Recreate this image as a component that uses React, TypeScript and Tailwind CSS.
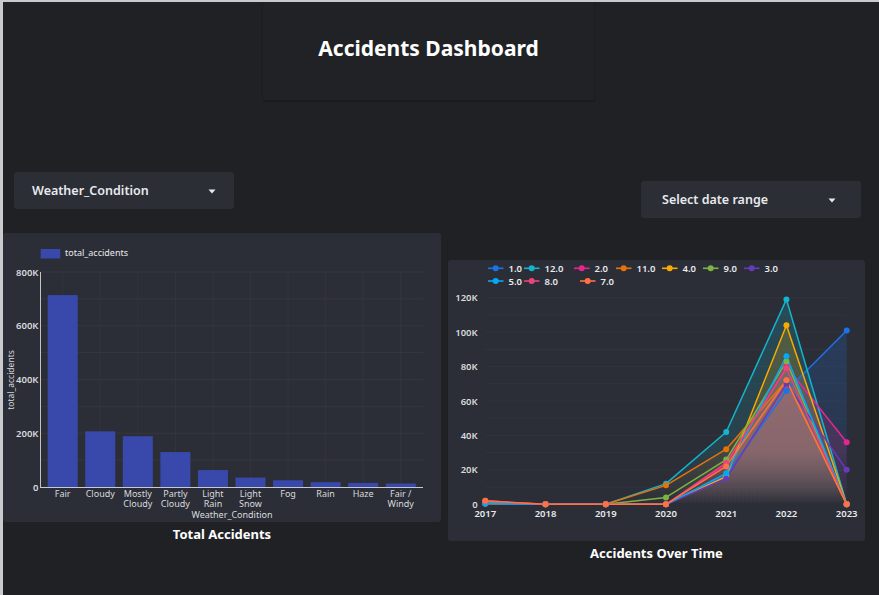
import React from "react";

const bars = [
  { label: ["Fair"], v: 714 },
  { label: ["Cloudy"], v: 207 },
  { label: ["Mostly", "Cloudy"], v: 189 },
  { label: ["Partly", "Cloudy"], v: 130 },
  { label: ["Light", "Rain"], v: 63 },
  { label: ["Light", "Snow"], v: 35 },
  { label: ["Fog"], v: 25 },
  { label: ["Rain"], v: 18 },
  { label: ["Haze"], v: 15 },
  { label: ["Fair /", "Windy"], v: 13 },
];

const series = [
  { name: "1.0", color: "#1a73e8", vals: [0.5, 0, 0, 0, 17, 66, 101], lx: 40, row: 0 },
  { name: "12.0", color: "#12b5cb", vals: [1, 0, 0, 12, 42, 119, 0], lx: 76, row: 0 },
  { name: "2.0", color: "#e52592", vals: [0.5, 0, 0, 0, 23, 80, 36], lx: 126, row: 0 },
  { name: "11.0", color: "#e8710a", vals: [1.5, 0, 0, 11, 32, 72, 0], lx: 168, row: 0 },
  { name: "4.0", color: "#f9ab00", vals: [0.5, 0, 0, 0, 16, 104, 0], lx: 214, row: 0 },
  { name: "9.0", color: "#7cb342", vals: [0.5, 0, 0, 4, 26, 83, 0], lx: 255, row: 0 },
  { name: "3.0", color: "#673ab7", vals: [0.5, 0, 0, 0, 15, 70, 20], lx: 296, row: 0 },
  { name: "5.0", color: "#03a9f4", vals: [0.5, 0, 0, 0, 18, 86, 0], lx: 40, row: 1 },
  { name: "8.0", color: "#e8457a", vals: [2, 0, 0, 0, 24, 79, 0], lx: 76, row: 1 },
  { name: "7.0", color: "#ff7043", vals: [2, 0, 0, 0, 22, 72, 0], lx: 132, row: 1 },
];

const years = ["2017", "2018", "2019", "2020", "2021", "2022", "2023"];

function Caret() {
  return (
    <svg width="8" height="5" viewBox="0 0 8 5">
      <path d="M0.5 0.5 L7.5 0.5 L4 4.5 Z" fill="#e8eaed" />
    </svg>
  );
}

function BarChart() {
  const T = 39;
  const B = 254;
  const L = 37;
  const R = 420;
  const y = (v: number) => B - (v / 800) * (B - T);
  const cx = (i: number) => 59.7 + i * 37.56;
  return (
    <svg width="438" height="289" viewBox="0 0 438 289">
      <rect x="37.7" y="16" width="19.5" height="9.5" fill="#3949ab" />
      <text x="62" y="23.3" fontSize="9" fill="#e8eaed">total_accidents</text>
      {[0, 1, 2, 3, 4, 5, 6, 7].map((k) => (
        <line key={k} x1={L} x2={R} y1={y(k * 100 + 100)} y2={y(k * 100 + 100)} stroke="#3a3d46" strokeWidth="0.6" />
      ))}
      {bars.map((b, i) => (
        <line key={i} x1={cx(i)} x2={cx(i)} y1={T} y2={B} stroke="#363941" strokeWidth="0.6" />
      ))}
      {[0, 200, 400, 600, 800].map((v) => (
        <text key={v} x="35.5" y={y(v) + 3.5} fontSize="9.5" fontWeight="600" fill="#d8dadd" textAnchor="end">
          {v === 0 ? "0" : `${v}K`}
        </text>
      ))}
      {bars.map((b, i) => (
        <rect key={i} x={cx(i) - 15} y={y(b.v)} width="30" height={B - y(b.v)} fill="#3949ab" />
      ))}
      <line x1={L + 0.5} x2={L + 0.5} y1={T} y2={B} stroke="#e8eaed" strokeWidth="0.8" />
      <line x1={L} x2={R} y1={B + 0.5} y2={B + 0.5} stroke="#c8cacd" strokeWidth="1" />
      {bars.map((b, i) => (
        <text key={i} x={cx(i)} y="263.5" fontSize="9" fill="#d8dadd" textAnchor="middle">
          {b.label.map((l, j) => (
            <tspan key={j} x={cx(i)} dy={j ? 10 : 0}>
              {l}
            </tspan>
          ))}
        </text>
      ))}
      <text x="229" y="284.5" fontSize="9" fill="#d8dadd" textAnchor="middle">Weather_Condition</text>
      <text x="0" y="0" fontSize="8.5" fill="#d8dadd" textAnchor="middle" transform="translate(10.5 147) rotate(-90)">
        total_accidents
      </text>
    </svg>
  );
}

function LineChart() {
  const x = (i: number) => 37.3 + i * 60.23;
  const B = 244.3;
  const y = (v: number) => B - (v / 120) * 206.6;
  return (
    <svg width="417" height="281" viewBox="0 0 417 281">
      <defs>
        {series.map((s, i) => (
          <linearGradient key={i} id={`g${i}`} x1="0" y1="30" x2="0" y2={B} gradientUnits="userSpaceOnUse">
            <stop offset="0" stopColor={s.color} stopOpacity="0.22" />
            <stop offset="0.75" stopColor={s.color} stopOpacity="0.14" />
            <stop offset="1" stopColor={s.color} stopOpacity="0" />
          </linearGradient>
        ))}
      </defs>
      {series.map((s, i) => (
        <g key={i}>
          <line x1={s.lx} x2={s.lx + 15.5} y1={s.row ? 21 : 8.3} y2={s.row ? 21 : 8.3} stroke={s.color} strokeWidth="1.6" />
          <circle cx={s.lx + 7.7} cy={s.row ? 21 : 8.3} r="3" fill={s.color} />
          <text x={s.lx + 20.5} y={(s.row ? 21 : 8.3) + 3.5} fontSize="9.5" fontWeight="600" fill="#e8eaed">
            {s.name}
          </text>
        </g>
      ))}
      {Array.from({ length: 12 }, (_, k) => (
        <line key={k} x1={x(0)} x2={x(6)} y1={y(k * 10 + 10)} y2={y(k * 10 + 10)} stroke="#353842" strokeWidth="0.6" />
      ))}
      {[0, 20, 40, 60, 80, 100, 120].map((v) => (
        <text key={v} x="29.7" y={y(v) + 3.5} fontSize="9.5" fontWeight="600" fill="#d8dadd" textAnchor="end">
          {v === 0 ? "0" : `${v}K`}
        </text>
      ))}
      {series.map((s, i) => (
        <path
          key={i}
          d={`M${x(0)} ${B} ` + s.vals.map((v, k) => `L${x(k)} ${y(v)}`).join(" ") + ` L${x(6)} ${B} Z`}
          fill={`url(#g${i})`}
        />
      ))}
      {series.map((s, i) => (
        <path
          key={i}
          d={s.vals.map((v, k) => `${k ? "L" : "M"}${x(k)} ${y(v)}`).join(" ")}
          fill="none"
          stroke={s.color}
          strokeWidth="1.5"
          strokeLinejoin="round"
        />
      ))}
      {series.map((s, i) =>
        s.vals.map((v, k) => <circle key={`${i}-${k}`} cx={x(k)} cy={y(v)} r="3" fill={s.color} />)
      )}
      {years.map((yr, k) => (
        <text key={yr} x={x(k)} y="257" fontSize="9.5" fontWeight="600" fill="#e8eaed" textAnchor="middle">
          {yr}
        </text>
      ))}
    </svg>
  );
}

export default function App() {
  return (
    <div className="w-[879px] h-[595px] overflow-hidden bg-[#202124] border-t-2 border-l-[3px] border-[#c9cacc] font-['Noto_Sans',sans-serif] text-[#e8eaed]">
      <div className="ml-[260px] w-[331px] h-[98px] bg-[#212226] shadow-[0_1px_2px_rgba(0,0,0,0.35)] flex justify-center pt-[31px]">
        <h1 className="text-[21px] font-bold text-white leading-[30px]">Accidents Dashboard</h1>
      </div>

      <div className="flex">
        {/* left column */}
        <div className="w-[438px] flex flex-col">
          <div className="mt-[72px] ml-[11px] w-[220px] h-[37px] rounded-[3px] bg-[#2c2e36] flex items-center justify-between pl-[18px] pr-[18px] pt-[1px]">
            <span className="text-[12.5px] font-semibold text-[#e8eaed]">Weather_Condition</span>
            <Caret />
          </div>
          <div className="mt-[24px] h-[289px] rounded-[3px] bg-[#2c2e37]">
            <BarChart />
          </div>
          <div className="mt-[3px] text-center text-[13px] font-bold text-white">Total Accidents</div>
        </div>

        {/* right column */}
        <div className="ml-[7px] w-[417px] flex flex-col">
          <div className="mt-[81px] ml-[193px] w-[220px] h-[37px] rounded-[3px] bg-[#2c2e36] flex items-center justify-between pl-[21px] pr-[25px] pt-[1px]">
            <span className="text-[12.5px] font-semibold text-[#e8eaed]">Select date range</span>
            <Caret />
          </div>
          <div className="mt-[42px] h-[281px] rounded-[3px] bg-[#2c2e37]">
            <LineChart />
          </div>
          <div className="mt-[3px] text-center text-[13px] font-bold text-white">Accidents Over Time</div>
        </div>
      </div>
    </div>
  );
}
